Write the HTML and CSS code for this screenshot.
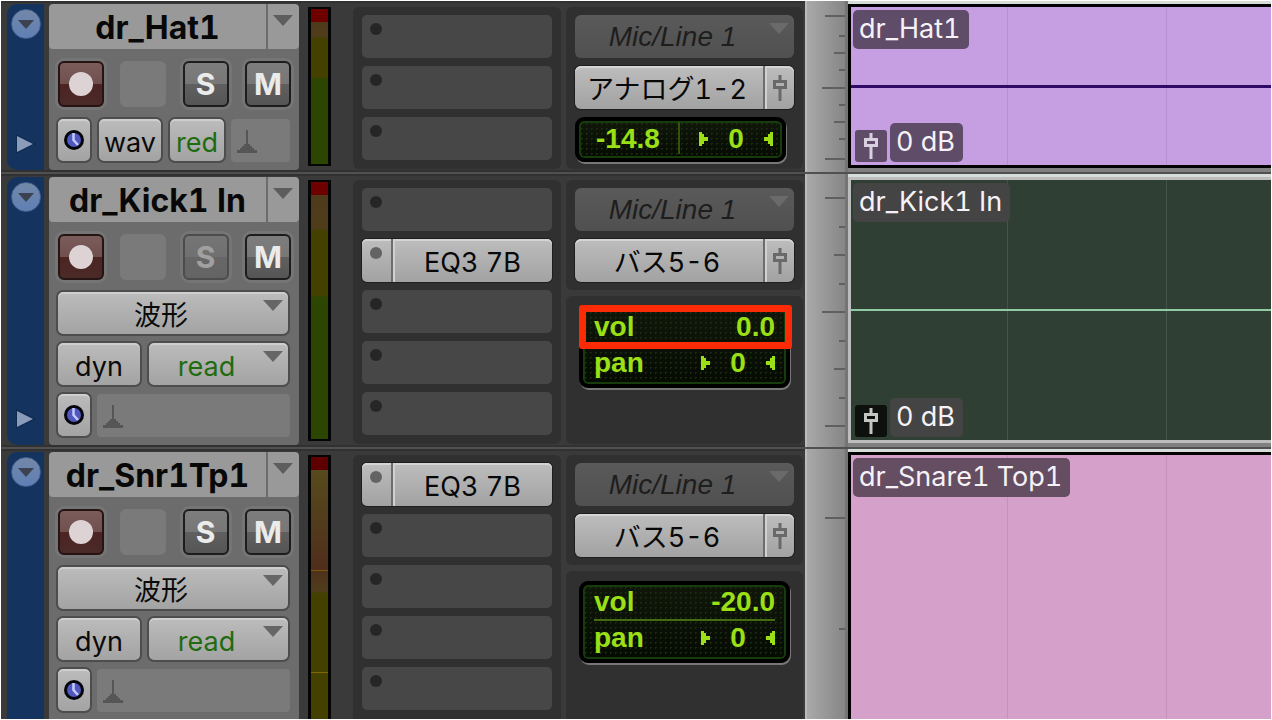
FILE: index.html
```html
<!DOCTYPE html>
<html lang="ja">
<head>
  <meta charset="UTF-8" />
  <meta name="viewport" content="width=device-width, initial-scale=1.0"/>
  <title>Edit Window</title>
  <link rel="stylesheet" href="styles.css">
</head>
<body>

  <!-- Shared icons -->
  <svg class="sprite" aria-hidden="true">
    <symbol id="i-down" viewBox="0 0 20 11"><path d="M0 0h20L10 11z" fill="currentColor"/></symbol>
    <symbol id="i-play" viewBox="0 0 22 22"><path d="M1 1v20L21 11z" fill="#112b50"/><path d="M2 3v16L18 11z" fill="#8a9cba"/></symbol>
    <symbol id="i-clock" viewBox="0 0 20 20"><circle cx="10" cy="10" r="10" fill="#05050c"/><circle cx="10" cy="10" r="7" fill="#5058bd"/><path d="M9.500 3v7l4.500 5" fill="none" stroke="#c3caff" stroke-width="2.500"/></symbol>
    <symbol id="i-metro" viewBox="0 0 20 23"><path d="M9 0h2v14h2v2h2v2h2v2h3v3H0v-3h3v-2h2v-2h2v-2h2z" fill="currentColor"/></symbol>
    <symbol id="i-fader" viewBox="0 0 14 26"><path d="M7 0v6M7 13v13" stroke="currentColor" stroke-width="3"/><path d="M1.500 6.500h11v6h-11z" fill="none" stroke="currentColor" stroke-width="3"/></symbol>
    <symbol id="i-panl" viewBox="0 0 9 16"><path d="M0 1h3v2h2v3h4v4H5v3H3v2H0z" fill="currentColor"/></symbol>
    <symbol id="i-panr" viewBox="0 0 9 16"><path d="M9 1H6v2H4v3H0v4h4v3h2v2h3z" fill="currentColor"/></symbol>
  </svg>

  <main class="app">

    <!-- dr_Hat1 -->
    <section class="track">
      <div class="controls">
        <div class="strip">
          <button class="circle" aria-label="Track options"><svg><use href="#i-down"/></svg></button>
          <button class="play" aria-label="Show lanes"><svg><use href="#i-play"/></svg></button>
        </div>
        <div class="header">
          <div class="name">
            <h2>dr_Hat1</h2>
            <button aria-label="Playlist"><svg><use href="#i-down"/></svg></button>
          </div>
          <div class="buttons">
            <button class="rec" aria-label="Record"><i></i></button>
            <span class="blank"></span>
            <button>S</button>
            <button>M</button>
          </div>
          <div class="options">
            <div class="row">
              <button class="chip clock" aria-label="Timebase"><svg><use href="#i-clock"/></svg></button>
              <button class="chip view">wav</button>
              <button class="chip auto green">red</button>
              <span class="metro"><svg><use href="#i-metro"/></svg></span>
            </div>
          </div>
        </div>
        <div class="meter"></div>
        <div class="inserts panel">
          <button class="slot" aria-label="Insert A"><i></i></button>
          <button class="slot" aria-label="Insert B"><i></i></button>
          <button class="slot" aria-label="Insert C"><i></i></button>
        </div>
        <div class="io">
          <div class="panel">
            <label class="pick input"><select aria-label="Input"><option>Mic/Line 1</option></select><svg><use href="#i-down"/></svg></label>
            <div class="output">
              <select aria-label="Output"><option>アナログ1-2</option></select>
              <button aria-label="Output window"><svg><use href="#i-fader"/></svg></button>
            </div>
            <div class="lcd single">
              <span class="level">-14.8</span>
              <span class="pan"><svg><use href="#i-panl"/></svg><span>0</span><svg><use href="#i-panr"/></svg></span>
            </div>
          </div>
        </div>
      </div>
      <div class="ruler short">
        <i class="l"></i><i></i><i class="m"></i><i></i><i class="xl"></i><i></i><i class="m"></i><i></i><i class="l"></i>
      </div>
      <div class="lane">
        <div class="clip purple">
          <span class="tag">dr_Hat1</span>
          <div class="gain">
            <span class="fader"><svg><use href="#i-fader"/></svg></span>
            <span class="tag">0 dB</span>
          </div>
        </div>
      </div>
    </section>

    <!-- dr_Kick1 In -->
    <section class="track">
      <div class="controls">
        <div class="strip">
          <button class="circle" aria-label="Track options"><svg><use href="#i-down"/></svg></button>
          <button class="play" aria-label="Show lanes"><svg><use href="#i-play"/></svg></button>
        </div>
        <div class="header">
          <div class="name">
            <h2>dr_Kick1 In</h2>
            <button aria-label="Playlist"><svg><use href="#i-down"/></svg></button>
          </div>
          <div class="buttons">
            <button class="rec" aria-label="Record"><i></i></button>
            <span class="blank"></span>
            <button class="off">S</button>
            <button>M</button>
          </div>
          <div class="options">
            <label class="chip pick"><select aria-label="Track view"><option>波形</option></select><svg><use href="#i-down"/></svg></label>
            <div class="row">
              <button class="chip dyn">dyn</button>
              <label class="chip pick green"><select aria-label="Automation mode"><option>read</option></select><svg><use href="#i-down"/></svg></label>
            </div>
            <div class="row">
              <button class="chip clock" aria-label="Timebase"><svg><use href="#i-clock"/></svg></button>
              <span class="metro"><svg><use href="#i-metro"/></svg></span>
            </div>
          </div>
        </div>
        <div class="meter"></div>
        <div class="inserts panel">
          <button class="slot" aria-label="Insert A"><i></i></button>
          <button class="slot active"><i></i><span>EQ3 7B</span></button>
          <button class="slot" aria-label="Insert C"><i></i></button>
          <button class="slot" aria-label="Insert D"><i></i></button>
          <button class="slot" aria-label="Insert E"><i></i></button>
        </div>
        <div class="io">
          <div class="panel">
            <label class="pick input"><select aria-label="Input"><option>Mic/Line 1</option></select><svg><use href="#i-down"/></svg></label>
            <div class="output">
              <select aria-label="Output"><option>バス5-6</option></select>
              <button aria-label="Output window"><svg><use href="#i-fader"/></svg></button>
            </div>
          </div>
          <div class="panel levels">
            <div class="lcd">
              <div class="line"><span>vol</span><span>0.0</span></div>
              <div class="line"><span>pan</span><span class="pan"><svg><use href="#i-panl"/></svg><span>0</span><svg><use href="#i-panr"/></svg></span></div>
              <div class="highlight"></div>
            </div>
          </div>
        </div>
      </div>
      <div class="ruler">
        <i class="l"></i><i></i><i class="m"></i><i></i><i class="xl"></i><i></i><i class="m"></i><i></i><i class="l"></i>
      </div>
      <div class="lane">
        <div class="clip dark">
          <span class="tag">dr_Kick1 In</span>
          <div class="gain">
            <span class="fader"><svg><use href="#i-fader"/></svg></span>
            <span class="tag">0 dB</span>
          </div>
        </div>
      </div>
    </section>

    <!-- dr_Snr1Tp1 -->
    <section class="track large">
      <div class="controls">
        <div class="strip">
          <button class="circle" aria-label="Track options"><svg><use href="#i-down"/></svg></button>
        </div>
        <div class="header">
          <div class="name">
            <h2>dr_Snr1Tp1</h2>
            <button aria-label="Playlist"><svg><use href="#i-down"/></svg></button>
          </div>
          <div class="buttons">
            <button class="rec" aria-label="Record"><i></i></button>
            <span class="blank"></span>
            <button>S</button>
            <button>M</button>
          </div>
          <div class="options">
            <label class="chip pick"><select aria-label="Track view"><option>波形</option></select><svg><use href="#i-down"/></svg></label>
            <div class="row">
              <button class="chip dyn">dyn</button>
              <label class="chip pick green"><select aria-label="Automation mode"><option>read</option></select><svg><use href="#i-down"/></svg></label>
            </div>
            <div class="row">
              <button class="chip clock" aria-label="Timebase"><svg><use href="#i-clock"/></svg></button>
              <span class="metro"><svg><use href="#i-metro"/></svg></span>
            </div>
          </div>
        </div>
        <div class="meter"></div>
        <div class="inserts panel">
          <button class="slot active"><i></i><span>EQ3 7B</span></button>
          <button class="slot" aria-label="Insert B"><i></i></button>
          <button class="slot" aria-label="Insert C"><i></i></button>
          <button class="slot" aria-label="Insert D"><i></i></button>
          <button class="slot" aria-label="Insert E"><i></i></button>
        </div>
        <div class="io">
          <div class="panel">
            <label class="pick input"><select aria-label="Input"><option>Mic/Line 1</option></select><svg><use href="#i-down"/></svg></label>
            <div class="output">
              <select aria-label="Output"><option>バス5-6</option></select>
              <button aria-label="Output window"><svg><use href="#i-fader"/></svg></button>
            </div>
          </div>
          <div class="panel levels">
            <div class="lcd">
              <div class="line"><span>vol</span><span>-20.0</span></div>
              <div class="line"><span>pan</span><span class="pan"><svg><use href="#i-panl"/></svg><span>0</span><svg><use href="#i-panr"/></svg></span></div>
            </div>
          </div>
        </div>
      </div>
      <div class="ruler">
        <i class="l"></i><i></i>
      </div>
      <div class="lane">
        <div class="clip pink">
          <span class="tag">dr_Snare1 Top1</span>
        </div>
      </div>
    </section>

  </main>

</body>
</html>
```
FILE: styles.css
```css
* {
  box-sizing: border-box;
  margin: 0;
  padding: 0;
}

body {
  background: #fff;
  font-family: Inter, "Noto Sans CJK JP", sans-serif;
  font-size: 27px;
  font-optical-sizing: none;
  font-variant-numeric: tabular-nums;
  overflow: hidden;
}

button, select {
  font: inherit;
  font-optical-sizing: none;
  font-variant-numeric: tabular-nums;
  color: inherit;
  border: none;
  background: none;
  cursor: pointer;
}

select {
  appearance: none;
  width: 100%;
  height: 100%;
  text-align: center;
  text-align-last: center;
}

svg {
  display: block;
}

.sprite {
  position: absolute;
  width: 0;
  height: 0;
}

.app {
  display: flex;
  flex-direction: column;
  height: 100vh;
  border: 1px solid #fff;
  background: #3a3a3a;
  overflow: hidden;
}

/* Track rows */
.track {
  display: flex;
  flex-shrink: 0;
  border-bottom: 2px solid #505050;
}

.track.large {
  min-height: 480px;
}

.controls {
  display: flex;
  flex-shrink: 0;
  padding: 3px 2px 2px 6px;
  background: #3a3a3a;
  box-shadow: inset 0 2px #313131, inset 0 -2px #313131;
}

.strip {
  display: flex;
  flex-direction: column;
  align-items: center;
  justify-content: space-between;
  width: 37px;
  padding: 5px 0 15px;
  border-radius: 10px 0 0 10px;
  background: #15335f;
}

.circle {
  display: grid;
  place-items: center;
  width: 30px;
  height: 30px;
  border-radius: 50%;
  border: 1px solid #44618f;
  background: linear-gradient(#7388a8, #5f7fb5);
  color: #3c4350;
}

.circle svg {
  width: 16px;
  height: 9px;
}

.play svg {
  width: 22px;
  height: 22px;
}

.header {
  width: 250px;
  margin-left: 5px;
  border-radius: 4px;
  background: #6c6c6c;
  overflow: hidden;
}

.name {
  display: flex;
  height: 45px;
  border-radius: 4px;
  background: #999;
}

.name h2 {
  flex: 1;
  font-size: 32px;
  font-weight: 700;
  line-height: 48px;
  text-align: center;
  white-space: nowrap;
  color: #080808;
}

.name button {
  width: 33px;
  padding: 11px 0 0 5px;
  border-left: 2px solid #6c6c6c;
  color: #5d5d5d;
  display: flex;
}

.name svg,
.pick svg {
  width: 20px;
  height: 11px;
}

.buttons {
  display: flex;
  justify-content: space-between;
  padding: 12px 8px 10px 9px;
}

.buttons button,
.blank {
  display: grid;
  place-items: center;
  width: 46px;
  height: 46px;
  border-radius: 6px;
}

.buttons button {
  border: 2px solid #1d1d1d;
  background: linear-gradient(#7d7d7d, #777 50%, #606060 50%, #555);
  box-shadow: 0 0 0 3px #757575;
  color: #ebebeb;
  font-weight: 700;
  font-size: 30px;
}

.buttons .off {
  border-color: #4c4c4c;
  background: linear-gradient(#757575, #707070 50%, #676767 50%, #646464);
  color: #a0a0a0;
}

.buttons .rec {
  border-color: #241414;
  background: linear-gradient(#7a5c5a, #70504e 50%, #4c2422 50%, #4a2a28);
}

.rec i {
  width: 24px;
  height: 24px;
  border-radius: 50%;
  background: #ddd3d5;
}

.blank,
.metro {
  background: #7a7a7a;
}

.options {
  display: flex;
  flex-direction: column;
  gap: 5px;
  padding: 0 9px 7px 7px;
}

.row {
  display: flex;
  gap: 5px;
}

.chip {
  display: block;
  height: 46px;
  border: 2px solid #4d4d4d;
  border-radius: 7px;
  background: linear-gradient(#bcbcbc, #a3a3a3);
  box-shadow: inset 0 2px #cfcfcf;
  color: #0a0a0a;
  text-align: center;
}

.view,
.auto,
.dyn,
.chip select {
  padding-top: 4px;
}

.clock {
  display: grid;
  place-items: center;
  width: 36px;
}

.clock svg {
  width: 20px;
  height: 20px;
}

.view {
  width: 66px;
}

.auto {
  width: 58px;
}

.dyn {
  width: 86px;
}

.row .pick {
  flex: 1;
}

.green {
  color: #1f6b10;
}

.metro {
  flex: 1;
  height: 43px;
  margin-top: 2px;
  padding: 11px 6px;
  border-radius: 4px;
  color: #565656;
}

.metro svg {
  width: 20px;
  height: 23px;
}

.pick {
  position: relative;
}

.pick select {
  padding-right: 24px;
}

.pick svg {
  position: absolute;
  top: 8px;
  right: 5px;
  color: #666;
  pointer-events: none;
}

/* Level meter */
.meter {
  width: 23px;
  margin: 3px 0 4px 9px;
  border: 2px solid #050505;
  border-width: 2px 3px;
  background: linear-gradient(#6e0000 13px, #4f3a1c 13px, #4f3d1a 18%, #434000 19%, #434000 44%, #2c4500 45%);
}

.large .meter {
  background:
    linear-gradient(#85500f, #85500f) 0 113px / 100% 1px no-repeat,
    linear-gradient(#7d6a00, #7d6a00) 0 215px / 100% 1px no-repeat,
    linear-gradient(#5e0000 13px, #564a1c 13px, #4f2f1c 110px, #4f3d1a 135px, #434000 136px);
}

/* Inserts */
.panel {
  display: flex;
  flex-direction: column;
  gap: 8px;
  padding: 8px 9px;
  border-radius: 6px;
  background: #303030;
}

.inserts {
  width: 208px;
  margin: 3px 0 1px 22px;
}

.slot {
  display: flex;
  height: 43px;
  border-radius: 5px;
  background: #474747;
}

.slot i {
  width: 12px;
  height: 12px;
  margin: 8px;
  border-radius: 50%;
  background: #262626;
}

.active {
  background: linear-gradient(#bdbdbd, #a2a2a2);
  box-shadow: 0 0 0 1px #1e1e1e, inset 0 2px #d4d4d4;
  color: #080808;
}

.active i {
  background: #636363;
}

.active span {
  flex: 1;
  height: 43px;
  margin-left: 1px;
  border-left: 2px solid #6d6d6d;
  box-shadow: inset 2px 0 #d0d0d0;
  line-height: 48px;
}

/* Inputs and outputs */
.io {
  display: flex;
  flex-direction: column;
  gap: 6px;
  width: 237px;
  margin: 3px 0 1px 5px;
}

.io .panel:last-child {
  flex: 1;
}

.io .panel:only-child {
  padding-bottom: 5px;
}

.input {
  height: 43px;
  border-radius: 6px;
  background: linear-gradient(#5a5a5a, #505050);
  color: #1e1e1e;
  font: italic 28px "Liberation Sans", sans-serif;
}

.input svg {
  color: #6a6a6a;
}

.output {
  display: flex;
  height: 43px;
  border-radius: 6px;
  background: linear-gradient(#bdbdbd, #a2a2a2);
  box-shadow: 0 0 0 1px #1e1e1e, inset 0 2px #d4d4d4;
  color: #080808;
}

.output select {
  flex: 1;
  padding: 4px 4px 0 0;
}

.output button {
  display: grid;
  place-items: center;
  flex-shrink: 0;
  width: 31px;
  border-left: 2px solid #6d6d6d;
  box-shadow: inset 2px 0 #d0d0d0;
  color: #696969;
}

.output svg,
.fader svg {
  width: 14px;
  height: 26px;
}

.lcd {
  position: relative;
  width: 211px;
  padding: 0 11px 5px;
  border: 4px solid #000;
  border-radius: 9px;
  background: radial-gradient(#1b2b12 1px, transparent 1px) 0 0 / 5px 5px, linear-gradient(#10170a, #060b02);
  box-shadow: 1px 2px #777, inset 0 0 0 2px #173c0b;
  color: #9be016;
  font: bold 28px/34px "Liberation Sans", sans-serif;
}

.single {
  display: flex;
  justify-content: space-between;
  height: 45px;
  padding: 1px 9px 0 17px;
}

.level {
  padding-right: 18px;
  height: 32px;
  border-right: 2px solid #35520f;
}

.levels {
  padding: 10px 13px;
}

.line {
  display: flex;
  justify-content: space-between;
  height: 34px;
}

.line + .line {
  height: 35px;
  border-top: 2px solid #466b12;
}

.pan {
  display: flex;
  align-items: center;
  justify-content: space-between;
  width: 74px;
  height: 34px;
}

.pan svg {
  width: 9px;
  height: 16px;
}

.highlight {
  position: absolute;
  top: -5px;
  left: -4px;
  right: -6px;
  height: 44px;
  border: 7px solid #fd2b05;
  border-radius: 3px;
}

/* Scale next to the clips */
.ruler {
  display: flex;
  flex-direction: column;
  justify-content: space-between;
  align-items: flex-end;
  flex-shrink: 0;
  width: 43px;
  padding: 23px 0 20px;
  border-left: 2px solid #bbb;
  border-right: 3px solid #747474;
  background: linear-gradient(90deg, #a9a9a9, #868686);
}

.ruler i {
  width: 6px;
  height: 2px;
  background: #606060;
}

.ruler .m {
  width: 11px;
}

.ruler .l {
  width: 20px;
}

.ruler .xl {
  width: 23px;
}

.short {
  padding: 14px 0 12px;
}

.short .l:first-child {
  margin-bottom: 3px;
}

.short .l:last-child {
  margin-top: 3px;
}

.large .ruler {
  justify-content: flex-start;
  gap: 109px;
  padding-top: 68px;
}

/* Clips */
.lane {
  display: flex;
  flex: 1;
  min-width: 0;
  padding: 3px 0 4px;
  background: #808080;
  box-shadow: inset 0 3px #d6dcd8;
}

.clip {
  display: flex;
  flex-direction: column;
  align-items: flex-start;
  justify-content: space-between;
  flex: 1;
  padding: 3px 3px 3px 2px;
  border: 3px solid #000;
  border-right: none;
}

.purple {
  background:
    linear-gradient(#2f0a66, #2f0a66) 0 50% / 100% 3px no-repeat,
    linear-gradient(#b591cf, #b591cf) 156px 0 / 1px 100% no-repeat,
    linear-gradient(#b591cf, #b591cf) 315px 0 / 1px 100% no-repeat,
    #c69fe3;
}

.dark {
  border-color: #bdbdbd;
  background:
    linear-gradient(#91cba4, #91cba4) 0 50% / 100% 2px no-repeat,
    linear-gradient(#43544a, #43544a) 156px 0 / 1px 100% no-repeat,
    linear-gradient(#43544a, #43544a) 315px 0 / 1px 100% no-repeat,
    #303f34;
}

.pink {
  background:
    linear-gradient(#c592bb, #c592bb) 156px 0 / 1px 100% no-repeat,
    linear-gradient(#c592bb, #c592bb) 315px 0 / 1px 100% no-repeat,
    #d5a1ca;
}

.tag {
  height: 39px;
  padding: 0 8px 0 6px;
  border-radius: 5px;
  background: #5e4c69;
  color: #f5f2f7;
  line-height: 38px;
  white-space: nowrap;
}

.dark .tag {
  background: #444;
}

.pink .tag {
  background: #654d62;
}

.gain {
  display: flex;
  align-items: flex-end;
  gap: 3px;
  padding-left: 2px;
}

.fader {
  display: grid;
  place-items: center;
  width: 32px;
  height: 32px;
  border-radius: 3px;
  background: #5e4c69;
  color: #d9d0df;
}

.dark .fader {
  background: #0d100d;
  color: #c4c4c4;
}
```
